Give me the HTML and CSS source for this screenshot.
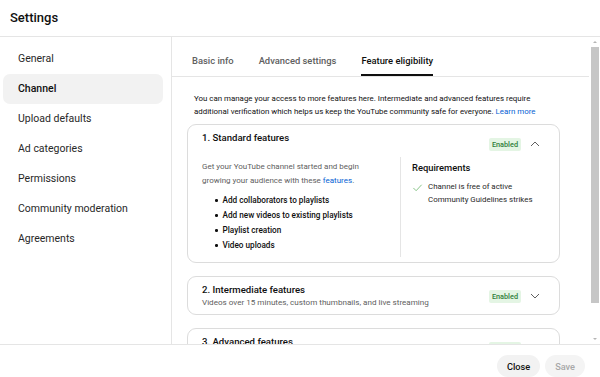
FILE: index.html
```html
<!DOCTYPE html>
<html lang="en">
<head>
  <meta charset="UTF-8" />
  <meta name="viewport" content="width=device-width, initial-scale=1.0"/>
  <title>Settings</title>
  <link rel="stylesheet" href="styles.css">
</head>
<body>

<div class="dialog">
  <header class="dialog-header">Settings</header>

  <div class="dialog-body">
    <nav class="sidebar">
      <a class="nav-item">General</a>
      <a class="nav-item active">Channel</a>
      <a class="nav-item">Upload defaults</a>
      <a class="nav-item">Ad categories</a>
      <a class="nav-item">Permissions</a>
      <a class="nav-item">Community moderation</a>
      <a class="nav-item">Agreements</a>
    </nav>

    <main class="content">
      <div class="content-scroll">
        <div class="tabs">
          <span class="tab">Basic info</span>
          <span class="tab">Advanced settings</span>
          <span class="tab active">Feature eligibility</span>
        </div>

        <div class="panel">
          <p class="intro">
            You can manage your access to more features here. Intermediate and advanced features require
            additional verification which helps us keep the YouTube community safe for everyone. <a class="link">Learn more</a>
          </p>

          <!-- 1. Standard -->
          <section class="card">
            <div class="card-head">
              <div class="card-titles">
                <div class="card-title">1. Standard features</div>
              </div>
              <span class="badge">Enabled</span>
              <svg class="chevron" viewBox="0 0 12 12"><path d="M2 8 L6 4 L10 8" /></svg>
            </div>
            <div class="card-body">
              <div class="card-main">
                <p class="muted">Get your YouTube channel started and begin<br/>growing your audience with these <a class="link">features</a>.</p>
                <ul class="feature-list">
                  <li>Add collaborators to playlists</li>
                  <li>Add new videos to existing playlists</li>
                  <li>Playlist creation</li>
                  <li>Video uploads</li>
                </ul>
              </div>
              <div class="card-side">
                <div class="side-title">Requirements</div>
                <div class="req">
                  <svg class="check" viewBox="0 0 12 12"><path d="M1.5 6.5 L4.5 9.5 L10.5 3" /></svg>
                  <span>Channel is free of active<br/>Community Guidelines strikes</span>
                </div>
              </div>
            </div>
          </section>

          <!-- 2. Intermediate -->
          <section class="card">
            <div class="card-head">
              <div class="card-titles">
                <div class="card-title">2. Intermediate features</div>
                <div class="card-sub">Videos over 15 minutes, custom thumbnails, and live streaming</div>
              </div>
              <span class="badge">Enabled</span>
              <svg class="chevron" viewBox="0 0 12 12"><path d="M2 4 L6 8 L10 4" /></svg>
            </div>
          </section>

          <!-- 3. Advanced -->
          <section class="card">
            <div class="card-head">
              <div class="card-titles">
                <div class="card-title">3. Advanced features</div>
                <div class="card-sub">Higher daily upload limits, external links in video descriptions, and more</div>
              </div>
              <span class="badge">Enabled</span>
              <svg class="chevron" viewBox="0 0 12 12"><path d="M2 4 L6 8 L10 4" /></svg>
            </div>
          </section>
        </div>
      </div>

      <div class="scrollbar">
        <span class="arrow up"></span>
        <div class="thumb"></div>
        <span class="arrow down"></span>
      </div>
    </main>
  </div>

  <footer class="dialog-footer">
    <button class="btn">Close</button>
    <button class="btn disabled">Save</button>
  </footer>
</div>

</body>
</html>
```

FILE: styles.css
```css
html, body {
  margin: 0;
  height: 100%;
}

body {
  font-family: Roboto, Arial, sans-serif;
  color: #0f0f0f;
  background: #fff;
  overflow: hidden;
}

.dialog {
  height: 100vh;
  display: flex;
  flex-direction: column;
}

.dialog-header {
  height: 36px;
  line-height: 36px;
  padding-left: 10px;
  font-size: 13px;
  font-weight: 500;
  border-bottom: 1px solid #e5e5e5;
  flex-shrink: 0;
}

.dialog-body {
  flex: 1;
  display: flex;
  min-height: 0;
}

/* sidebar */
.sidebar {
  width: 171px;
  border-right: 1px solid #e5e5e5;
  padding-top: 7px;
  flex-shrink: 0;
}

.nav-item {
  display: block;
  height: 30px;
  line-height: 30px;
  margin: 0 8px 0 3px;
  padding-left: 15px;
  font-size: 10.5px;
  color: #282828;
  border-radius: 7px;
}

.nav-item.active {
  background: #f2f2f2;
  font-weight: 500;
  color: #0f0f0f;
}

/* content */
.content {
  flex: 1;
  display: flex;
  min-width: 0;
}

.content-scroll {
  flex: 1;
  overflow: hidden;
}

.tabs {
  display: flex;
  gap: 25px;
  height: 39px;
  padding-left: 20px;
  border-bottom: 1px solid #e5e5e5;
}

.tab {
  display: flex;
  align-items: center;
  font-size: 9.4px;
  font-weight: 500;
  color: #606060;
  border-bottom: 2px solid transparent;
  padding-top: 10px;
}

.tab.active {
  color: #0f0f0f;
  border-bottom-color: #0f0f0f;
}

.panel {
  padding: 15px 29px 0 15px;
}

.intro {
  margin: 0 0 6px;
  padding: 0 7px;
  font-size: 7.9px;
  line-height: 13px;
  color: #0f0f0f;
}

.link {
  color: #065fd4;
}

.card {
  border: 1px solid #dcdcdc;
  border-radius: 9px;
  padding: 6px 17px 5px 14px;
  margin-bottom: 13px;
}

.card-head {
  display: flex;
  align-items: center;
  min-height: 26px;
}

.card-titles {
  flex: 1;
  align-self: flex-start;
}

.card-title {
  font-size: 9.6px;
  font-weight: 500;
  line-height: 13px;
}

.card-sub {
  font-size: 8.1px;
  line-height: 13px;
  color: #606060;
}

.badge {
  background: #e4f5e4;
  color: #2f7d3a;
  font-size: 7.3px;
  font-weight: 500;
  padding: 2px 3px;
  border-radius: 2px;
  line-height: 9px;
}

.chevron {
  width: 12px;
  height: 12px;
  margin-left: 8px;
  margin-right: 1px;
  fill: none;
  stroke: #606060;
  stroke-width: 1;
}

.card-body {
  display: flex;
  height: 100px;
}

.card-main {
  width: 198px;
  border-right: 1px solid #e5e5e5;
  padding-top: 3px;
}

.muted {
  margin: 0;
  font-size: 8px;
  line-height: 13.5px;
  color: #606060;
}

.feature-list {
  list-style: none;
  margin: 6px 0 0;
  padding-left: 13px;
  font-size: 8.2px;
  font-weight: 500;
  line-height: 15px;
}

.feature-list li {
  display: flex;
  align-items: center;
  gap: 5px;
}

.feature-list li::before {
  content: "";
  width: 2.5px;
  height: 2.5px;
  border-radius: 50%;
  background: #0f0f0f;
}

.card-side {
  padding: 4px 0 0 11px;
}

.side-title {
  font-size: 9.4px;
  font-weight: 500;
  line-height: 13px;
  margin-bottom: 6px;
}

.req {
  display: flex;
  align-items: flex-start;
  gap: 5px;
  font-size: 7.9px;
  line-height: 13px;
  color: #282828;
}

.check {
  width: 11px;
  height: 11px;
  margin-top: 2px;
  fill: none;
  stroke: #7fbf7f;
  stroke-width: 1;
}

/* fake scrollbar */
.scrollbar {
  width: 11px;
  display: flex;
  flex-direction: column;
  align-items: center;
  background: #fff;
}

.arrow {
  width: 0;
  height: 0;
  border-left: 2px solid transparent;
  border-right: 2px solid transparent;
  margin: 4px 0;
}

.arrow.up {
  border-bottom: 2px solid #b5b5b5;
}

.arrow.down {
  border-top: 2px solid #b5b5b5;
  margin-top: auto;
}

.thumb {
  width: 8px;
  height: 256px;
  background: #c6c6c6;
  margin-left: 1px;
}

/* footer */
.dialog-footer {
  height: 33px;
  border-top: 1px solid #e5e5e5;
  display: flex;
  justify-content: flex-end;
  align-items: flex-start;
  gap: 5px;
  padding: 10px 15px 0 0;
  box-sizing: border-box;
  overflow: hidden;
  flex-shrink: 0;
}

.btn {
  height: 22px;
  padding: 0 10px;
  border: none;
  border-radius: 11px;
  background: #f2f2f2;
  font-family: Roboto, Arial, sans-serif;
  font-size: 9.2px;
  font-weight: 500;
  color: #0f0f0f;
}

.btn.disabled {
  color: #a8a8a8;
  background: #f4f4f4;
}
```
